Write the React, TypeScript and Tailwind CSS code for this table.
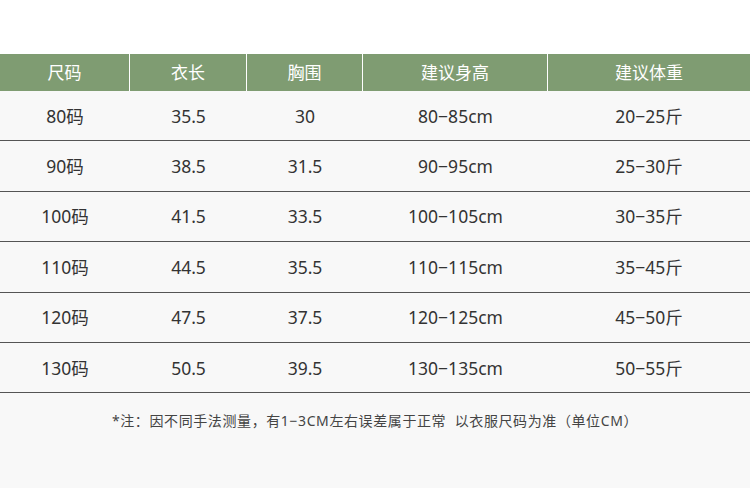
const headers = ['尺码', '衣长', '胸围', '建议身高', '建议体重'];

const rows = [
  ['80码', '35.5', '30', '80−85cm', '20−25斤'],
  ['90码', '38.5', '31.5', '90−95cm', '25−30斤'],
  ['100码', '41.5', '33.5', '100−105cm', '30−35斤'],
  ['110码', '44.5', '35.5', '110−115cm', '35−45斤'],
  ['120码', '47.5', '37.5', '120−125cm', '45−50斤'],
  ['130码', '50.5', '39.5', '130−135cm', '50−55斤'],
];

const cols = 'grid grid-cols-[130px_117px_116px_185px_1fr]';

export default function App() {
  return (
    <div
      className="w-[750px] h-[488px] bg-[#f8f8f8] flex flex-col"
      style={{ fontFamily: '"Noto Sans", "Noto Sans CJK SC", sans-serif' }}
    >
      <div className="h-[54px] bg-white" />
      <div className={`${cols} h-[37px] bg-[#7f9c72] text-white text-[17px]`}>
        {headers.map((h, i) => (
          <div
            key={h}
            className={`flex items-center justify-center ${i < headers.length - 1 ? 'border-r-[1.5px] border-white' : ''}`}
          >
            {h}
          </div>
        ))}
      </div>
      {rows.map((r) => (
        <div
          key={r[0]}
          className={`${cols} h-[50.4px] border-b-[1.5px] border-[#555555] text-[17.5px] text-[#333333]`}
        >
          {r.map((c, i) => (
            <div key={i} className="flex items-center justify-center">
              {c}
            </div>
          ))}
        </div>
      ))}
      <div className="mt-[17px] text-center text-[14px] tracking-[0.6px] text-[#444444]">
        *注：因不同手法测量，有1−3CM左右误差属于正常&nbsp; 以衣服尺码为准（单位CM）
      </div>
    </div>
  );
}
